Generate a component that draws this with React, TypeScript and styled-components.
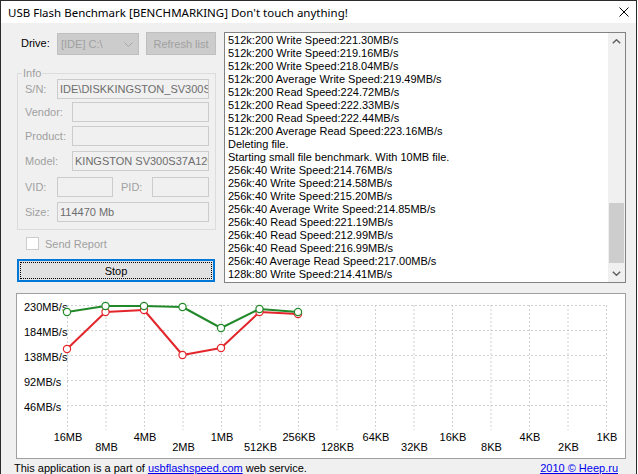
import React from "react";
import styled, { createGlobalStyle } from "styled-components";

const Global = createGlobalStyle`
  * { box-sizing: border-box; }
  html, body { margin: 0; padding: 0; background: #ffffff; }
  body { width: 638px; height: 474px; overflow: hidden; }
`;

const Window = styled.div`
  width: 637px;
  height: 474px;
  border: 1px solid #2b2b2b;
  border-bottom: none;
  background: #f0f0f0;
  display: flex;
  flex-direction: column;
  overflow: hidden;
  font-family: "Liberation Sans", Arial, sans-serif;
  font-size: 11px;
  color: #000;
`;

const TitleBar = styled.div`
  flex: none;
  height: 22px;
  background: #ffffff;
  display: flex;
  align-items: center;
  justify-content: space-between;
  padding: 0 7px 0 7px;
  font-family: "Noto Sans", "Open Sans", sans-serif;
  font-size: 11.5px;
  color: #000;
`;

const CloseGlyph = styled.svg`
  width: 10px;
  height: 10px;
  display: block;
`;

const Body = styled.div`
  flex: 1;
  min-height: 0;
  display: flex;
  flex-direction: column;
  padding: 9px 9px 0 16px;
`;

const TopSection = styled.div`
  display: flex;
  align-items: flex-start;
  gap: 8px;
`;

const LeftCol = styled.div`
  width: 199px;
  flex: none;
  display: flex;
  flex-direction: column;
`;

const DriveRow = styled.div`
  display: flex;
  align-items: flex-start;
  height: 23px;
`;

const DriveLabel = styled.div`
  width: 40px;
  padding-left: 4px;
  line-height: 23px;
`;

const Combo = styled.div`
  width: 82px;
  height: 22px;
  margin-top: 1px;
  border: 1px solid #bfbfbf;
  background: #cccccc;
  color: #a0a0a0;
  display: flex;
  align-items: center;
  justify-content: space-between;
  padding: 0 5px 0 3px;
`;

const Chevron = styled.svg`
  display: block;
  width: 9px;
  height: 5px;
`;

const DisabledButton = styled.div`
  width: 70px;
  height: 23px;
  margin-left: 7px;
  border: 1px solid #bfbfbf;
  background: #cccccc;
  color: #a0a0a0;
  display: flex;
  align-items: center;
  justify-content: center;
`;

const Group = styled.fieldset`
  margin: 12px 0 0;
  padding: 0 6px 7px 7px;
  border: 1px solid #dcdcdc;
  min-width: 0;
  width: 100%;
  display: flex;
  flex-direction: column;
`;

const Legend = styled.legend`
  font-size: 11px;
  line-height: 12px;
  padding: 0 1px;
  margin-left: -3px;
  color: #a0a0a0;
`;

const FieldRow = styled.div<{ $mt: number }>`
  display: flex;
  align-items: center;
  height: 20px;
  margin-top: ${(p) => p.$mt}px;
`;

const FieldLabel = styled.div<{ $w?: number; $ml?: number }>`
  ${(p) => (p.$w ? `width: ${p.$w}px; flex: none;` : "flex: 1;")}
  margin-left: ${(p) => p.$ml ?? 0}px;
  color: #a0a0a0;
  white-space: nowrap;
`;

const Field = styled.div<{ $w: number }>`
  width: ${(p) => p.$w}px;
  flex: none;
  height: 20px;
  border: 1px solid #cccccc;
  background: #f0f0f0;
  color: #6d6d6d;
  padding-left: 2px;
  line-height: 18px;
  overflow: hidden;
  white-space: nowrap;
`;

const CheckRow = styled.div`
  display: flex;
  align-items: center;
  gap: 6px;
  height: 13px;
  margin-top: 7px;
  padding-left: 9px;
  color: #a0a0a0;
`;

const CheckBox = styled.div`
  width: 13px;
  height: 13px;
  border: 1px solid #cccccc;
  background: #ffffff;
`;

const StopButton = styled.div`
  width: 198px;
  height: 23px;
  margin-top: 9px;
  border: 2px solid #0078d7;
  background: #e1e1e1;
  outline: 1px dotted #000;
  outline-offset: -4px;
  display: flex;
  align-items: center;
  justify-content: center;
  color: #000;
`;

const LogBox = styled.div`
  width: 402px;
  height: 251px;
  border: 1px solid #828282;
  background: #ffffff;
  display: flex;
`;

const LogText = styled.div`
  flex: 1;
  min-width: 0;
  padding: 1px 0 0 3px;
  line-height: 13px;
  overflow: hidden;
  white-space: nowrap;
`;

const ScrollBar = styled.div`
  width: 17px;
  flex: none;
  background: #f0f0f0;
  display: flex;
  flex-direction: column;
`;

const ScrollArrow = styled.div`
  height: 17px;
  flex: none;
  display: flex;
  align-items: center;
  justify-content: center;
`;

const ScrollTrack = styled.div`
  flex: 1;
  display: flex;
  flex-direction: column;
  padding: 0 1px;
`;

const Thumb = styled.div<{ $top: number; $size: number }>`
  margin-top: ${(p) => p.$top}px;
  height: ${(p) => p.$size}px;
  background: #cdcdcd;
`;

const ChartBox = styled.div`
  width: 610px;
  height: 166px;
  margin: 10px 0 0 -1px;
  border: 1px solid #a0a0a0;
  background: #ffffff;
`;

const ChartSvg = styled.svg`
  display: block;
  font-family: "Liberation Sans", Arial, sans-serif;
  font-size: 11px;
`;

const Footer = styled.div`
  display: flex;
  justify-content: space-between;
  line-height: 13px;
  margin: 3px 9px 0 -3px;
  white-space: nowrap;
`;

const Link = styled.span`
  color: #0000ee;
  text-decoration: underline;
`;

const logLines = [
  "512k:200 Write Speed:221.30MB/s",
  "512k:200 Write Speed:219.16MB/s",
  "512k:200 Write Speed:218.04MB/s",
  "512k:200 Average Write Speed:219.49MB/s",
  "512k:200 Read Speed:224.72MB/s",
  "512k:200 Read Speed:222.33MB/s",
  "512k:200 Read Speed:222.44MB/s",
  "512k:200 Average Read Speed:223.16MB/s",
  "Deleting file.",
  "Starting small file benchmark. With 10MB file.",
  "256k:40 Write Speed:214.76MB/s",
  "256k:40 Write Speed:214.58MB/s",
  "256k:40 Write Speed:215.20MB/s",
  "256k:40 Average Write Speed:214.85MB/s",
  "256k:40 Read Speed:221.19MB/s",
  "256k:40 Read Speed:212.99MB/s",
  "256k:40 Read Speed:216.99MB/s",
  "256k:40 Average Read Speed:217.00MB/s",
  "128k:80 Write Speed:214.41MB/s",
];

const xLabels = [
  "16MB", "8MB", "4MB", "2MB", "1MB", "512KB", "256KB", "128KB",
  "64KB", "32KB", "16KB", "8KB", "4KB", "2KB", "1KB",
];

const yTicks = [
  { label: "230MB/s", y: 11 },
  { label: "184MB/s", y: 36 },
  { label: "138MB/s", y: 61 },
  { label: "92MB/s", y: 86 },
  { label: "46MB/s", y: 111 },
];

const greenPts = [18, 12, 12, 13, 34, 15, 18];
const redPts = [55, 18, 16, 61, 54, 18, 20];

const X0 = 50;
const STEP = 38.5;
const TOP = 11;
const BOTTOM = 136;
const xAt = (i: number) => X0 + STEP * i;

function Series({ pts, color }: { pts: number[]; color: string }) {
  const d = pts.map((y, i) => `${i === 0 ? "M" : "L"}${xAt(i)} ${y}`).join(" ");
  return (
    <g>
      <path d={d} fill="none" stroke={color} strokeWidth={2} strokeLinejoin="round" />
      {pts.map((y, i) => (
        <circle key={i} cx={xAt(i)} cy={y} r={3.6} fill="#fff" stroke={color} strokeWidth={1.2} />
      ))}
    </g>
  );
}

function Chart() {
  const right = xAt(14);
  return (
    <ChartSvg width={608} height={164} viewBox="0 0 608 164">
      {xLabels.map((_, i) => (
        <line
          key={`v${i}`}
          x1={xAt(i) + 0.5}
          x2={xAt(i) + 0.5}
          y1={TOP}
          y2={BOTTOM}
          stroke="#d0d0d0"
          strokeWidth={1}
          strokeDasharray="2 2"
        />
      ))}
      {yTicks.map((t) => (
        <line
          key={`h${t.y}`}
          x1={X0}
          x2={right + 1}
          y1={t.y + 0.5}
          y2={t.y + 0.5}
          stroke="#d0d0d0"
          strokeWidth={1}
          strokeDasharray="2 2"
        />
      ))}
      {yTicks.map((t) => (
        <text key={`yl${t.y}`} x={7} y={t.y + 6} fill="#000">
          {t.label}
        </text>
      ))}
      {xLabels.map((l, i) => (
        <text key={`xl${i}`} x={xAt(i) + 1} y={i % 2 === 0 ? 147 : 157} textAnchor="middle" fill="#000">
          {l}
        </text>
      ))}
      <Series pts={redPts} color="#e3262b" />
      <Series pts={greenPts} color="#22892a" />
    </ChartSvg>
  );
}

export default function App() {
  return (
    <>
      <Global />
      <Window>
        <TitleBar>
          <span>USB Flash Benchmark [BENCHMARKING] Don't touch anything!</span>
          <CloseGlyph viewBox="0 0 10 10">
            <path d="M0.5 0.5 L9.5 9.5 M9.5 0.5 L0.5 9.5" stroke="#000" strokeWidth={1} fill="none" />
          </CloseGlyph>
        </TitleBar>
        <Body>
          <TopSection>
            <LeftCol>
              <DriveRow>
                <DriveLabel>Drive:</DriveLabel>
                <Combo>
                  <span>[IDE] C:\</span>
                  <Chevron viewBox="0 0 9 5">
                    <path d="M0.5 0.5 L4.5 4.5 L8.5 0.5" stroke="#a8a8a8" strokeWidth={1} fill="none" />
                  </Chevron>
                </Combo>
                <DisabledButton>Refresh list</DisabledButton>
              </DriveRow>
              <Group>
                <Legend>Info</Legend>
                <FieldRow $mt={0}>
                  <FieldLabel>S/N:</FieldLabel>
                  <Field $w={152}>IDE\DISKKINGSTON_SV300S37A120G</Field>
                </FieldRow>
                <FieldRow $mt={3}>
                  <FieldLabel>Vendor:</FieldLabel>
                  <Field $w={137} />
                </FieldRow>
                <FieldRow $mt={4}>
                  <FieldLabel>Product:</FieldLabel>
                  <Field $w={137} />
                </FieldRow>
                <FieldRow $mt={5}>
                  <FieldLabel>Model:</FieldLabel>
                  <Field $w={137}>KINGSTON SV300S37A120G</Field>
                </FieldRow>
                <FieldRow $mt={6}>
                  <FieldLabel $w={32}>VID:</FieldLabel>
                  <Field $w={56} />
                  <FieldLabel $ml={8}>PID:</FieldLabel>
                  <Field $w={57} />
                </FieldRow>
                <FieldRow $mt={5}>
                  <FieldLabel>Size:</FieldLabel>
                  <Field $w={152}>114470 Mb</Field>
                </FieldRow>
              </Group>
              <CheckRow>
                <CheckBox />
                <span>Send Report</span>
              </CheckRow>
              <StopButton>Stop</StopButton>
            </LeftCol>
            <LogBox>
              <LogText>
                {logLines.map((l, i) => (
                  <div key={i}>{l}</div>
                ))}
              </LogText>
              <ScrollBar>
                <ScrollArrow>
                  <Chevron viewBox="0 0 9 5">
                    <path d="M0.8 4.3 L4.5 0.8 L8.2 4.3" stroke="#606060" strokeWidth={1.5} fill="none" />
                  </Chevron>
                </ScrollArrow>
                <ScrollTrack>
                  <Thumb $top={153} $size={60} />
                </ScrollTrack>
                <ScrollArrow>
                  <Chevron viewBox="0 0 9 5">
                    <path d="M0.8 0.7 L4.5 4.2 L8.2 0.7" stroke="#606060" strokeWidth={1.5} fill="none" />
                  </Chevron>
                </ScrollArrow>
              </ScrollBar>
            </LogBox>
          </TopSection>
          <ChartBox>
            <Chart />
          </ChartBox>
          <Footer>
            <span>
              This application is a part of <Link>usbflashspeed.com</Link> web service.
            </span>
            <Link>2010 © Heep.ru</Link>
          </Footer>
        </Body>
      </Window>
    </>
  );
}
